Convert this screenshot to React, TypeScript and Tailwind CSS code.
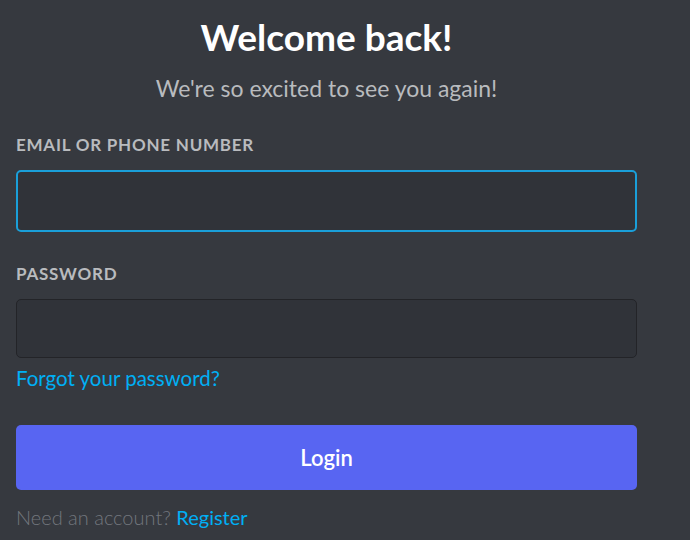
import React from "react";

export default function App() {
  return (
    <div
      className="min-h-screen w-full bg-[#36393f] px-4"
      style={{ fontFamily: "Lato, 'Noto Sans', sans-serif" }}
    >
      <div className="w-[621px]">
        {/* Header */}
        <h1 className="pt-[15px] text-center text-[37px] font-bold leading-[44px] text-white">
          Welcome back!
        </h1>
        <p className="mt-[15px] text-center text-[23px] leading-[28px] text-[#b9bbbe]">
          We're so excited to see you again!
        </p>

        {/* Email */}
        <label className="mt-[33px] block text-[17px] font-bold uppercase leading-[20px] tracking-[0.045em] text-[#b9bbbe]">
          Email or Phone Number
        </label>
        <input
          type="text"
          className="mt-[15px] block h-[62px] w-full rounded-[5px] border-2 border-[#1a9fd9] bg-[#303339] px-3 text-white outline-none"
        />

        {/* Password */}
        <label className="mt-[32px] block text-[17px] font-bold uppercase leading-[20px] tracking-[0.045em] text-[#b9bbbe]">
          Password
        </label>
        <input
          type="password"
          className="mt-[15px] block h-[59px] w-full rounded-[5px] border border-[#232428] bg-[#303339] px-3 text-white outline-none"
        />
        <a className="mt-[8px] block text-[20.5px] leading-[24px] text-[#00aff4]">
          Forgot your password?
        </a>

        <button className="mt-[35px] flex h-[65px] w-full items-center justify-center rounded-[5px] bg-[#5865f2] text-[22px] font-semibold text-white">
          Login
        </button>

        <p className="mt-[15px] text-[20px] font-light leading-[24px] text-[#72767d]">
          Need an account? <span className="font-normal text-[#00aff4]">Register</span>
        </p>
      </div>
    </div>
  );
}
